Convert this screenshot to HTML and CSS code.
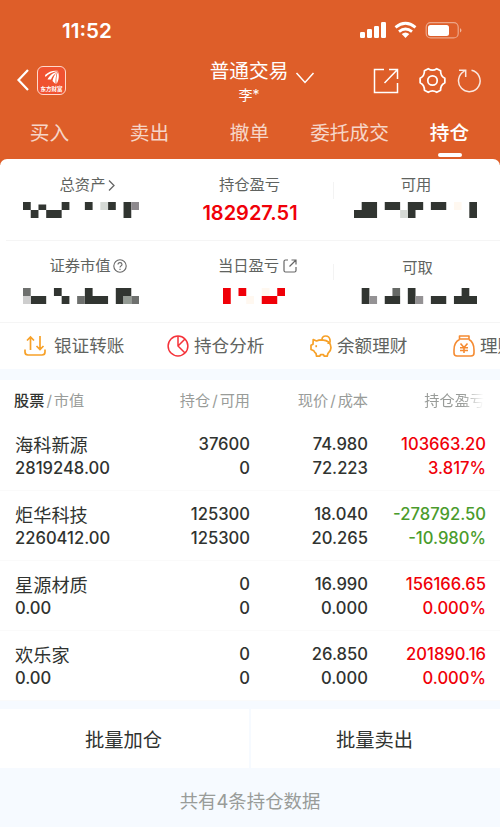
FILE: index.html
```html
<!DOCTYPE html>
<html lang="zh-CN">
<head>
    <meta charset="UTF-8">
    <meta name="viewport" content="width=device-width, initial-scale=1.0">
    <title>普通交易 - 持仓</title>
    <link rel="stylesheet" href="styles.css">
</head>
<body>
    <header class="header">
        <!-- Status bar -->
        <div class="status-bar">
            <span class="time">11:52</span>
            <svg class="status-icons" width="104" height="20" viewBox="0 0 104 20">
                <g fill="#fff">
                    <rect x="0" y="12" width="5" height="6" rx="1.2"/>
                    <rect x="7" y="9" width="5" height="9" rx="1.2"/>
                    <rect x="14" y="6" width="5" height="12" rx="1.2"/>
                    <rect x="21" y="2" width="5" height="16" rx="1.2"/>
                    <path d="M45.500 18l-3.800-3.900q3.800-3 7.600 0z"/>
                    <rect x="68" y="5" width="21" height="11" rx="2.500"/>
                </g>
                <g fill="none" stroke="#fff" stroke-width="2.800">
                    <path d="M35.500 7.400q10-8.200 20 0"/>
                    <path d="M39 11.700q6.500-5.300 13 0"/>
                </g>
                <rect x="66.200" y="2.600" width="32" height="15.300" rx="4.500" fill="none" stroke="#fff" stroke-opacity=".45" stroke-width="1.200"/>
                <path d="M100 8q3 2.300 0 4.600z" fill="#fff" fill-opacity=".55"/>
            </svg>
        </div>

        <!-- Title bar -->
        <div class="nav">
            <div class="nav-left">
                <svg width="14" height="24" viewBox="0 0 14 24" fill="none" stroke="#fff" stroke-width="2.200"><path d="M12 2L2.500 12 12 22"/></svg>
                <div class="logo">
                    <svg width="16" height="16" viewBox="0 0 16 16" fill="#fff">
                        <path d="M1 5C5 1 10 0 14.500 1 9 1.500 4.500 3.500 1.500 7z"/>
                        <path d="M3.500 9.500C5 6 9 2.500 14 1.500 10.500 4 8 6.500 7 9.500z"/>
                        <path d="M8.500 11C9 7.500 11 4 13 2.500 11.800 6 11.500 9 11.500 14z"/>
                        <path d="M12.500 14C12 9 12.500 5 14 1.500c1 3 1.500 8-1.500 12.500z"/>
                    </svg>
                    <span>东方财富</span>
                </div>
            </div>
            <div class="nav-title">
                <div class="title">普通交易</div>
                <div class="user">李*</div>
            </div>
            <svg class="chevron" width="20" height="14" viewBox="0 0 20 14" fill="none" stroke="#fff" stroke-width="1.500"><path d="M1.500 2l8.500 9.500L18.500 2"/></svg>
            <div class="nav-actions">
                <svg width="26" height="26" viewBox="0 0 26 26" fill="none" stroke="#fff" stroke-width="1.500"><path d="M11 1.500H1.500v23h23V15M16 1.500h8.500V11M24.500 1.500L11.500 15"/></svg>
                <svg class="gear" width="27" height="27" viewBox="0 0 28 28" fill="none" stroke="#fff" stroke-width="1.800" stroke-linejoin="round">
                    <path d="M18.400 1.800L22.400 4Q22.200 9.250 26.800 11.700V16.300Q22.200 18.750 22.400 24L18.400 26.200Q14 23.400 9.600 26.200L5.600 24Q5.800 18.750 1.200 16.300V11.700Q5.800 9.250 5.600 4L9.600 1.800Q14 4.600 18.400 1.800z"/>
                    <circle cx="14" cy="14" r="4.900"/>
                </svg>
                <svg class="refresh" width="25" height="26" viewBox="0 0 25 26" fill="none" stroke="#fff" stroke-opacity=".85" stroke-width="1.500"><path d="M14.500 3.300A10.800 10.800 0 1 1 7.500 4.200M2 3.200h6.700V10"/></svg>
            </div>
        </div>

        <!-- Tabs -->
        <nav class="tabs">
            <a class="tab">买入</a>
            <a class="tab">卖出</a>
            <a class="tab">撤单</a>
            <a class="tab">委托成交</a>
            <a class="tab active">持仓</a>
        </nav>
    </header>

    <section class="summary">
        <div class="cell">
            <div class="label indent">总资产<svg width="9" height="13" viewBox="0 0 9 13" fill="none" stroke="#666" stroke-width="1.300"><path d="M2 1.500l5 5-5 5"/></svg></div>
            <svg class="mask mask-left" width="116" height="16" viewBox="0 0 15 2" preserveAspectRatio="none" fill="#313531">
                <path d="M0 0h1v1H0zM1 1h1v1H1zM2 .3h1V1H2zM3 1h2v1H3zM5 0h1v1H5zM8 0h1v1H8zM11 0h1v1h-1zM13 0h1v2h-1z"/>
                <path d="M10 0h1v1h-1z" fill="#d6dad6"/>
                <path d="M14 0h1v1h-1z" fill="#8d898d"/>
            </svg>
        </div>
        <div class="cell">
            <div class="label">持仓盈亏</div>
            <div class="profit">182927.51</div>
        </div>
        <div class="cell">
            <div class="label">可用</div>
            <svg class="mask mask-right" width="123" height="16" viewBox="0 0 16 2" preserveAspectRatio="none" fill="#313531">
                <path d="M0 1h1V0h2v2H0zM4 0h2v1H4zM7 0h2v1H8v1H7zM10 0h2v1h-2zM15 0h1v2h-1z"/>
                <path d="M6 1h1v1H6z" fill="#d6dad6"/>
                <path d="M13 0h1v1h-1z" fill="#fff8f0"/>
            </svg>
        </div>
        <div class="cell second">
            <div class="label indent">证券市值<svg width="14" height="14" viewBox="0 0 14 14" fill="none" stroke="#666" stroke-width="1.100"><circle cx="7" cy="7" r="6.200"/><path d="M5 5.600q0-2 2-2t2 1.800q0 1-1.200 1.700-.8.500-.8 1.500M7 9.700V11"/></svg></div>
            <svg class="mask mask-left" width="116" height="16" viewBox="0 0 15 2" preserveAspectRatio="none" fill="#313531">
                <path d="M1 1h2v1H1zM4 0h1v1H4zM5 1h1v1H5zM8 0h1v1h2v1H8zM12 0h2v1h-1v1h-1z"/>
                <path d="M0 0h1v1H0zM7 1h1v1H7zM14 1h1v1h-1z" fill="#6e706e"/>
                <path d="M0 1h1v1H0z" fill="#cecece"/>
                <path d="M13 1h1v1h-1z" fill="#949b94"/>
            </svg>
        </div>
        <div class="cell second">
            <div class="label day">当日盈亏<svg width="14" height="14" viewBox="0 0 14 14" fill="none" stroke="#666" stroke-width="1.200"><path d="M5 1H2.500Q1 1 1 2.500v9Q1 13 2.500 13h9q1.500 0 1.500-1.500V8M8.500 1H13v4.500M13 1L6.500 7.500"/></svg></div>
            <svg class="mask mask-day" width="62" height="16" viewBox="0 0 8 2" preserveAspectRatio="none" fill="#f00008">
                <path d="M0 0h1v2H0zM2 0h1v1H2zM5 1h2V0h1v1H7v1H5z"/>
                <path d="M3 1h1v1H3zM5 0h1v1H5z" fill="#fff8f0"/>
            </svg>
        </div>
        <div class="cell second">
            <div class="label take">可取</div>
            <svg class="mask mask-right" width="123" height="16" viewBox="0 0 16 2" preserveAspectRatio="none" fill="#313531">
                <path d="M1 0h1v2H1zM4 1h2v1H4zM7 0h1v2H7zM10 1h2v1h-2zM13 1h1V0h1v1h1v1h-3z"/>
                <path d="M2 1h1v1H2zM8 1h1v1H8z" fill="#949294"/>
                <path d="M5 0h1v1H5z" fill="#666966"/>
            </svg>
        </div>
    </section>

    <!-- Shortcuts, the last one runs off the screen -->
    <section class="shortcuts">
        <div class="shortcut">
            <svg width="22" height="22" viewBox="0 0 22 22" fill="none" stroke="#f7a128" stroke-width="1.700"><path d="M1 14.500v2.500q0 3 3 3h14q3 0 3-3v-2.500M6.500 15V2M3 5.500L6.500 2 10 5.500M16 1v13.500M12.500 11l3.500 3.500 3.500-3.500"/></svg>
            <span>银证转账</span>
        </div>
        <div class="shortcut">
            <svg width="22" height="22" viewBox="0 0 22 22" fill="none" stroke="#f5333a" stroke-width="1.500"><circle cx="11" cy="11" r="9.900"/><path d="M11 1v10l7 7M11 11l7-7"/></svg>
            <span>持仓分析</span>
        </div>
        <div class="shortcut">
            <svg width="22" height="22" viewBox="0 0 22 22" fill="none" stroke="#f7a128" stroke-width="1.700" stroke-linejoin="round"><path d="M3.200 4.500L6.500 6q2-1.200 5.500-1.200 9 .7 9 8 0 3-3 5.500l-.8 2.900h-3l-.7-1.500h-3L9.800 21.200H6.500L6 18.500q-1.500-1-2.200-2.700L1 14.500v-4.200l2-1z"/><path d="M12 4.700Q12 1 15.700 1t4.300 4-2.500 3"/><path d="M6.200 10.200v2"/></svg>
            <span>余额理财</span>
        </div>
        <div class="shortcut">
            <svg width="22" height="22" viewBox="0 0 22 22" fill="none" stroke="#f58b32" stroke-width="1.600" stroke-linejoin="round"><path d="M6.500 1h9.500v3H6.500zM6.500 4.500C2.500 6.500 1 10.500 1 15v3q0 3 3 3h14q3 0 3-3v-3c0-4.500-1.500-8.500-5-10.500M7.500 8.500L11 12.500l3.500-4M11 12.500V18M7 12.700h8M7 15.500h8"/></svg>
            <span>理财</span>
        </div>
    </section>

    <section class="holdings">
        <div class="row head">
            <div><b>股票</b><i>/</i>市值</div>
            <div>持仓<i>/</i>可用</div>
            <div>现价<i>/</i>成本</div>
            <div class="fade">持仓盈亏</div>
        </div>
        <div class="row">
            <div><p class="name">海科新源</p><p>2819248.00</p></div>
            <div><p>37600</p><p>0</p></div>
            <div><p>74.980</p><p>72.223</p></div>
            <div class="up"><p>103663.20</p><p>3.817%</p></div>
        </div>
        <div class="row">
            <div><p class="name">炬华科技</p><p>2260412.00</p></div>
            <div><p>125300</p><p>125300</p></div>
            <div><p>18.040</p><p>20.265</p></div>
            <div class="down"><p>-278792.50</p><p>-10.980%</p></div>
        </div>
        <div class="row">
            <div><p class="name">星源材质</p><p>0.00</p></div>
            <div><p>0</p><p>0</p></div>
            <div><p>16.990</p><p>0.000</p></div>
            <div class="up"><p>156166.65</p><p>0.000%</p></div>
        </div>
        <div class="row">
            <div><p class="name">欢乐家</p><p>0.00</p></div>
            <div><p>0</p><p>0</p></div>
            <div><p>26.850</p><p>0.000</p></div>
            <div class="up"><p>201890.16</p><p>0.000%</p></div>
        </div>
    </section>

    <div class="batch">
        <button class="batch-button">批量加仓</button>
        <button class="batch-button">批量卖出</button>
    </div>

    <footer class="footer">共有4条持仓数据</footer>
</body>
</html>
```
FILE: styles.css
```css
* {
    box-sizing: border-box;
}
body {
    margin: 0;
    width: 500px;
    height: 827px;
    overflow: hidden;
    background: #f6faff;
    color: #303330;
    font-family: Inter, "Noto Sans CJK SC", sans-serif;
}
svg {
    display: block;
    flex: none;
}
p {
    margin: 0;
}
.header {
    height: 165px;
    background: #de5e29;
    color: #fff;
}
.status-bar {
    display: flex;
    justify-content: space-between;
    align-items: center;
    height: 60px;
    padding: 0 36px 0 62px;
}
.time {
    font-size: 20.6px;
    font-weight: 600;
}
.nav {
    display: grid;
    grid-template-columns: 209px 80px 31px 1fr;
    height: 48px;
}
.nav-left {
    display: flex;
    align-items: center;
    gap: 7px;
    padding: 0 0 8px 16px;
}
.logo {
    display: flex;
    flex-direction: column;
    align-items: center;
    width: 29px;
    height: 29px;
    padding-top: 3px;
    border: 1px solid #ffd9cb;
    border-radius: 6px;
    background: #f05230;
}
.logo span {
    font-size: 5.5px;
    line-height: 7px;
    font-weight: 700;
}
.nav-title {
    text-align: center;
    white-space: nowrap;
}
.title {
    font-size: 19.7px;
    line-height: 23px;
}
.user {
    font-size: 14px;
    line-height: 24px;
}
.chevron {
    margin: 11px 0 0 6px;
}
.nav-actions {
    display: flex;
    align-items: center;
    padding: 0 0 7px 53px;
}
.gear {
    margin-left: 20px;
}
.refresh {
    margin-left: 11px;
    margin-top: -2px;
}
.tabs {
    display: grid;
    grid-template-columns: repeat(5, 100px);
    height: 51px;
}
.tab {
    display: flex;
    flex-direction: column;
    align-items: center;
    padding: 10px 1px 0 0;
    font-size: 19.7px;
    line-height: 30px;
    color: rgba(255, 255, 255, 0.75);
}
.active {
    color: #fff;
    font-weight: 500;
}
.active::after {
    content: "";
    width: 24px;
    height: 4px;
    margin-top: 5px;
    border-radius: 2px;
    background: #fff;
}
.summary {
    display: grid;
    grid-template-columns: 167px 167px 166px;
    grid-template-rows: 82px 82px;
    height: 164px;
    margin-top: -6px;
    border-radius: 7px 7px 0 0;
    background: linear-gradient(#f5f5f5, #f5f5f5) 6px 81px / 100% 1px no-repeat,
        linear-gradient(#f3f3f3, #f3f3f3) 333px 23px / 1px 17px no-repeat,
        linear-gradient(#f3f3f3, #f3f3f3) 333px 105px / 1px 16px no-repeat,
        linear-gradient(#f5f5f5, #f5f5f5) 0 163px / 100% 1px no-repeat,
        #fff;
}
.cell {
    padding-top: 15px;
}
.second {
    padding-top: 14px;
}
.label {
    display: flex;
    justify-content: center;
    align-items: center;
    gap: 2px;
    height: 22px;
    padding-right: 2px;
    font-size: 15.3px;
    line-height: 22px;
    color: #606360;
}
.indent {
    padding-left: 11px;
}
.day {
    gap: 4px;
    padding-left: 16px;
}
.take {
    padding: 3px 0 0 1px;
}
.mask {
    margin-top: 6px;
}
.second .mask {
    margin-top: 11px;
}
.mask-left {
    margin-left: 23px;
}
.mask-right {
    margin-left: 20px;
}
.mask-day {
    margin-left: 56px;
}
.profit {
    margin-top: 4px;
    padding-right: 1px;
    font-size: 20px;
    line-height: 26px;
    font-weight: 600;
    text-align: center;
    color: #f00008;
}
.shortcuts {
    display: flex;
    height: 46px;
    padding-left: 24px;
    overflow: hidden;
    background: #fff;
}
.shortcut {
    display: flex;
    flex: none;
    align-items: center;
    gap: 5px;
    width: 143px;
    font-size: 17.6px;
    line-height: 44px;
    color: #606360;
}
.shortcut:first-child {
    gap: 8px;
}
.shortcut span {
    white-space: nowrap;
}
.holdings {
    margin-top: 11px;
}
.row {
    display: grid;
    grid-template-columns: 136px 100px 118px 118px;
    height: 70px;
    padding: 11px 14px 0;
    border-bottom: 1px solid #fafafa;
    background: #fff;
    font-size: 16.6px;
    line-height: 24px;
    font-weight: 500;
    text-align: right;
}
.row div:first-child {
    padding-left: 1px;
    text-align: left;
}
.row p {
    height: 24px;
}
.row .name {
    padding-top: 1px;
    font-size: 18.2px;
    font-weight: 400;
}
.holdings .head {
    height: 41px;
    padding-top: 9px;
    border: 0;
    font-size: 15.2px;
    font-weight: 400;
    color: #999c99;
}
.head div:first-child {
    padding-left: 0;
}
.head b {
    font-weight: 500;
    color: #303330;
}
.head i {
    padding: 0 2px;
    font-style: normal;
}
.head .fade {
    padding-right: 1px;
    -webkit-mask-image: linear-gradient(90deg, #000 80%, transparent 98%);
    mask-image: linear-gradient(90deg, #000 80%, transparent 98%);
}
.up {
    color: #f00008;
}
.down {
    color: #4a9b2c;
}
.batch {
    display: grid;
    grid-template-columns: 249px 249px;
    gap: 2px;
    margin-top: 8px;
}
.batch-button {
    height: 59px;
    padding: 0 2px 0 0;
    border: 0;
    background: #fff;
    font-family: inherit;
    font-size: 19.3px;
    color: #303330;
}
.footer {
    padding-top: 19px;
    font-size: 18.4px;
    line-height: 28px;
    text-align: center;
    color: #999c99;
}
```
